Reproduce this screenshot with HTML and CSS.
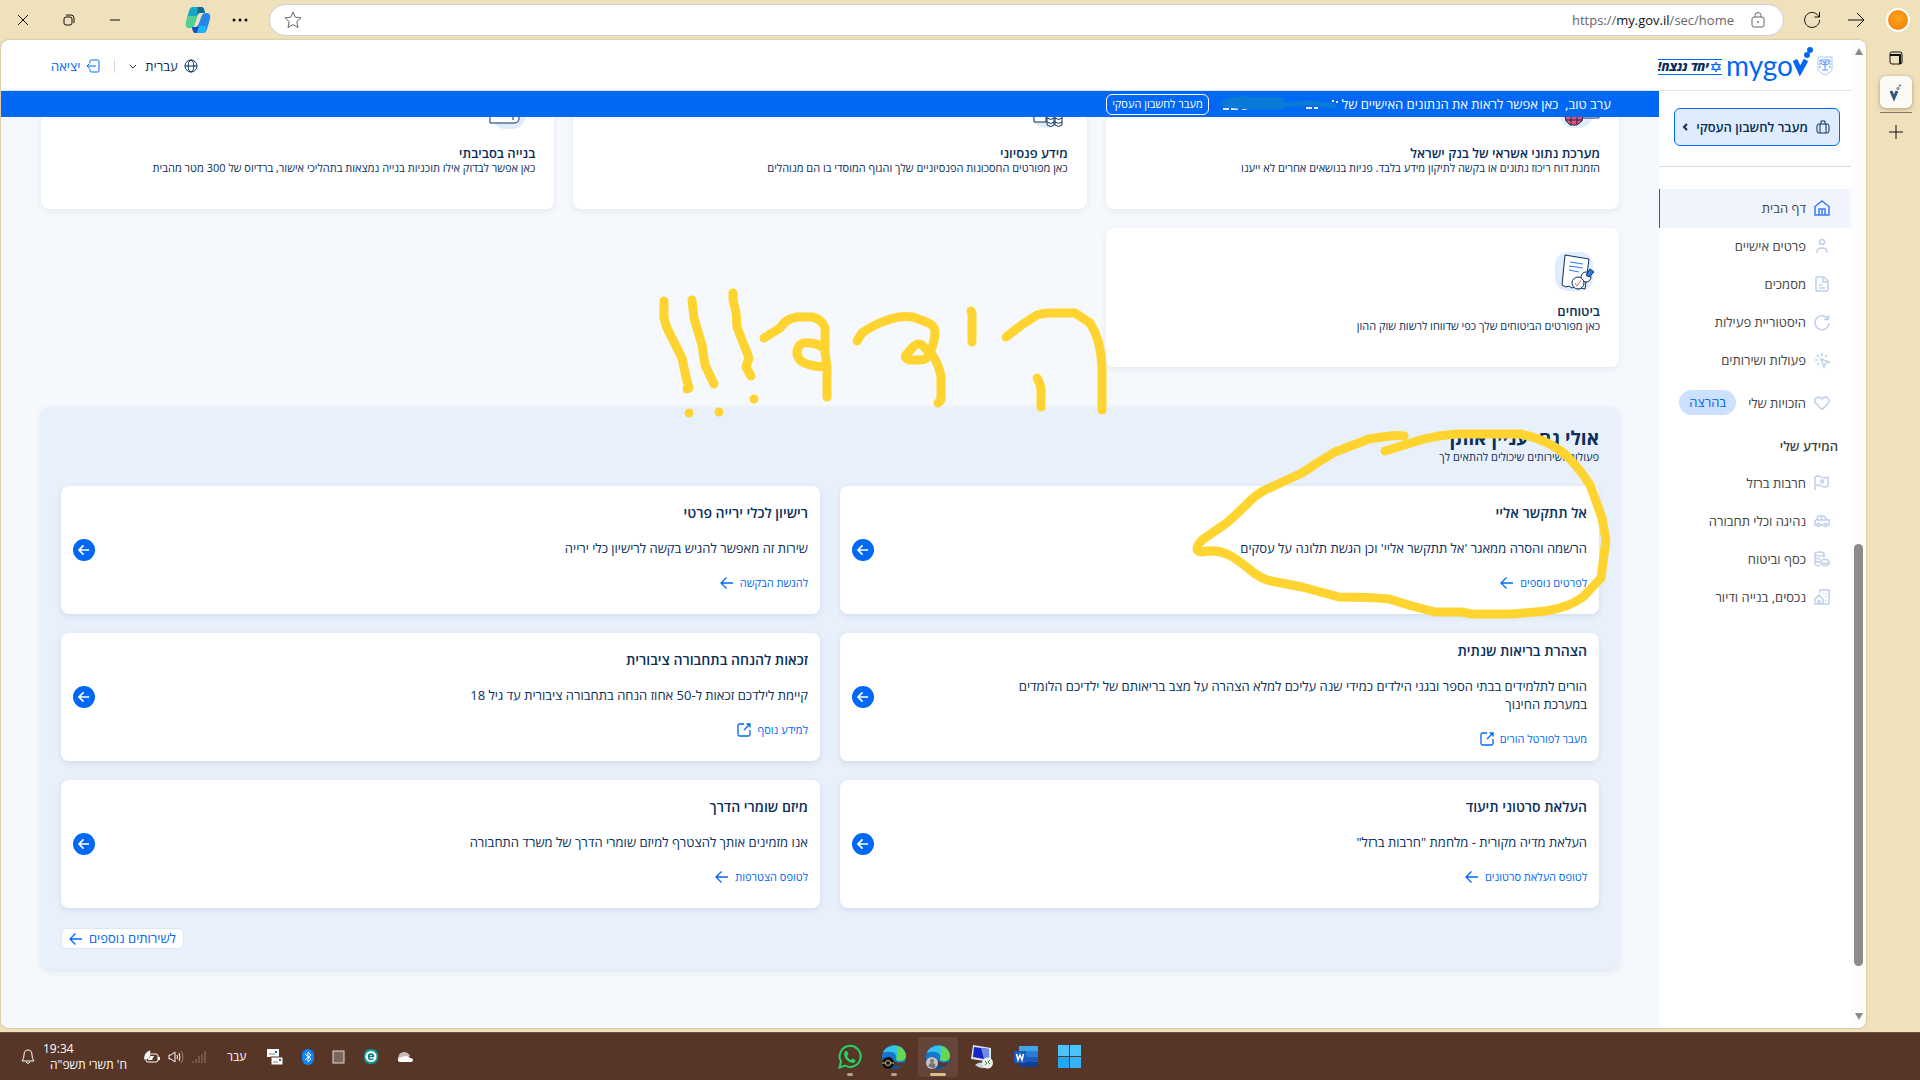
FILE: index.html
```
<!DOCTYPE html>
<html lang="he">
<head>
    <meta charset="UTF-8">
    <meta name="viewport" content="width=device-width, initial-scale=1.0">
    <title>mygov</title>
    <link rel="stylesheet" href="styles.css">
</head>
<body>
<!-- shared icons -->
<svg class="defs" aria-hidden="true">
    <symbol id="arrow" viewBox="0 0 14 14"><path d="M13 7H1M6.500 1.500L1 7l5.500 5.500"/></symbol>
    <symbol id="external" viewBox="0 0 14 14"><path d="M7 1H2.500Q1 1 1 2.500v9Q1 13 2.500 13h9q1.500 0 1.500-1.500V7M9.500 1H13v3.500M13 1L7 7"/></symbol>
    <symbol id="edge" viewBox="0 0 24 24">
        <circle cx="12" cy="12" r="12" fill="#1377d1"/>
        <path d="M1 8C4-1 20-3 23.500 8c1 5-2 8-6 8-4 0-4-2-3-3.500C15 8 8 5 1 8z" fill="#35c1e8"/>
        <path d="M15 1c6 2 9 6 9 11-1 4-5 5-8 4-2-1-2-2-1.500-3.500C16 9 15 5 15 1z" fill="#62d94e"/>
        <path d="M9 12c-2 5 2 10 9 10-6 4-14 1-15-5 0-4 3-6 6-5z" fill="#0b4f9c"/>
        <path d="M10 13c1 4 6 6 13 4-1 2-3 4-5 5-6 0-10-5-8-9z" fill="#573527"/>
    </symbol>
</svg>
<div class="window">
    <div class="topbar">
        <button class="chrome-btn" aria-label="Close"><svg width="12" height="12"><path d="M1 1l10 10M11 1L1 11"/></svg></button>
        <button class="chrome-btn" aria-label="Restore"><svg width="12" height="12"><rect x="1" y="3" width="8" height="8" rx="2"/><path d="M3 1h5q3 0 3 3v5"/></svg></button>
        <button class="chrome-btn" aria-label="Minimize"><svg width="12" height="12"><path d="M1 6h10"/></svg></button>
        <button class="chrome-btn copilot" aria-label="Copilot">
            <svg width="24" height="26" viewBox="0 0 24 26">
                <path d="M7 0h9q2 0 3 6l-5 0q-2 0-3 4l-3 9q-1 2-4 2H3q-4 0-3-6L3 4q1-4 4-4z" fill="#14a5c9"/>
                <path d="M0 15l2-6h9l-3 10q-1 2-4 2H3q-4 0-3-6z" fill="#53cf95"/>
                <path d="M17 26H9q-2 0-3-6h4q2 0 3-4l3-8q1-2 4-2h1q4 0 3 6l-3 10q-1 4-4 4z" fill="#2587ea"/>
                <path d="M17 26H9q-1 0-2-3l6-4h8l-1 3q-1 4-3 4z" fill="#17b7f2"/>
                <path d="M6 20h4q2 0 3-3l-2 9H9q-2 0-3-6z" fill="#1c4bc4"/>
                <path d="M12 0h4q2 0 3 6h-5q-2 0-3 2z" fill="#136a8c"/>
            </svg>
        </button>
        <button class="chrome-btn more" aria-label="More"><svg width="16" height="4"><circle cx="2" cy="2" r="1.500"/><circle cx="8" cy="2" r="1.500"/><circle cx="14" cy="2" r="1.500"/></svg></button>
        <div class="address">
            <svg class="gray" width="18" height="18" viewBox="0 0 18 18"><path d="M9 1l2.300 5.200 5.700.7-4.200 3.800 1.200 5.800L9 13.600 4 16.500l1.200-5.800L1 6.900l5.700-.7z"/></svg>
            <div class="url">https://<b>my.gov.il</b>/sec/home</div>
            <svg class="gray" width="14" height="16" viewBox="0 0 14 16"><rect x="1" y="5" width="12" height="10" rx="2"/><path d="M4 5V3.500a3 3 0 0 1 6 0V5"/><circle cx="7" cy="10" r=".6"/></svg>
        </div>
        <button class="chrome-btn refresh" aria-label="Refresh"><svg width="18" height="18" viewBox="0 0 18 18"><path d="M16 6a7.500 7.500 0 1 0 .6 3M16.500 1v5h-5"/></svg></button>
        <button class="chrome-btn forward" aria-label="Forward"><svg width="18" height="16" viewBox="0 0 18 16"><path d="M1 8h16M10 1l7 7-7 7"/></svg></button>
        <button class="avatar" aria-label="Profile"></button>
    </div>

    <div class="middle">
        <div class="page" dir="rtl">
            <div class="scrollbar" aria-hidden="true">
                <svg width="10" height="8"><path d="M5 0l4 7H1z"/></svg>
                <div class="track"><div class="thumb"></div></div>
                <svg width="10" height="8"><path d="M5 8l4-7H1z"/></svg>
            </div>
            <div class="site">
                <header class="header">
                    <svg width="16" height="20" viewBox="0 0 16 20" fill="none" stroke="#5b94f5"><path d="M1 1h14v12q0 3-7 6-7-3-7-6z" stroke="#a9c8fa"/><path d="M4 3v3q0 3 4 3t4-3V3M6 3v2q0 2 2 2t2-2V3M8 3v11M5 14h6"/><path d="M3 4v9M13 4v9" stroke-dasharray="2 1"/></svg>
                    <a class="logo" href="#" dir="ltr"><span>mygo</span><svg width="20" height="32" viewBox="0 0 20 32"><path d="M2 13l5 11 6-11" fill="none" stroke="#0068f5" stroke-width="5"/><circle cx="14" cy="8" r="3"/><circle cx="17" cy="3" r="3"/></svg></a>
                    <div class="slogan">
                        <svg width="12" height="12" viewBox="0 0 12 12" fill="none" stroke="#0068f5"><path d="M6 1l4.500 7.500h-9zM6 11L1.500 3.500h9z"/></svg>
                        <span>יחד ננצח!</span>
                    </div>
                    <div class="header-tools">
                        <button class="lang">
                            <svg width="14" height="14" viewBox="0 0 14 14"><circle cx="7" cy="7" r="6"/><ellipse cx="7" cy="7" rx="2.800" ry="6"/><path d="M1 7h12"/></svg>
                            <span>עברית</span>
                            <svg class="down" width="8" height="5" viewBox="0 0 8 5"><path d="M1 1l3 3 3-3"/></svg>
                        </button>
                        <a class="exit" href="#">
                            <svg width="14" height="14" viewBox="0 0 14 14"><path d="M4 4V2.500Q4 1 5.500 1h6Q13 1 13 2.500v9q0 1.500-1.500 1.500h-6Q4 13 4 11.500V10M10 7H1M3.500 4.500L1 7l2.500 2.500"/></svg>
                            <span>יציאה</span>
                        </a>
                    </div>
                </header>

                <div class="columns">
                    <nav class="sidebar">
                        <div class="switch-box">
                            <button class="switch">
                                <svg width="14" height="14" viewBox="0 0 14 14"><rect x="1" y="4" width="12" height="9" rx="2"/><path d="M4 4v9M10 4v9M5 4V1h4v3"/></svg>
                                <span>מעבר לחשבון העסקי</span>
                                <svg class="chev" width="6" height="8" viewBox="0 0 6 8"><path d="M5 1L2 4l3 3"/></svg>
                            </button>
                        </div>
                        <a class="item active" href="#"><svg viewBox="0 0 16 16"><path d="M1 6.500L8 1l7 5.500V15H1zM5 15V9h6v6M8 15v-6"/></svg>דף הבית</a>
                        <a class="item" href="#"><svg viewBox="0 0 16 16"><circle cx="8" cy="4" r="2.500"/><path d="M3 15v-1q0-4 5-4t5 4v1"/></svg>פרטים אישיים</a>
                        <a class="item" href="#"><svg viewBox="0 0 16 16"><path d="M2 2q0-1 1-1h7l4 4v9q0 1-1 1H3q-1 0-1-1zM9 1v5h5M5 9h3M5 12h6"/></svg>מסמכים</a>
                        <a class="item" href="#"><svg viewBox="0 0 16 16"><path d="M14 5a7 7 0 1 0 1 4M14.500 1v4.500H10"/></svg>היסטוריית פעילות</a>
                        <a class="item" href="#"><svg viewBox="0 0 16 16"><path d="M7 7l8 3-3.500 1.500L10 15zM8 1v3M3 3l2 2M13 3l-2 2M1 8h3M3 13l2-2"/></svg>פעולות ושירותים</a>
                        <a class="item tall" href="#"><svg viewBox="0 0 16 16"><path d="M8 14.500L2 8.500C-1.500 4 4.500-.5 8 4c3.500-4.500 9.500 0 6 4.500z"/></svg>הזכויות שלי<span class="badge">בהרצה</span></a>
                        <h2>המידע שלי</h2>
                        <a class="item" href="#"><svg viewBox="0 0 16 16"><path d="M1 15V2q3-2 6 0t7 0v9q-4 2-7 0t-6 0"/><circle cx="8" cy="6.500" r="1.500"/></svg>חרבות ברזל</a>
                        <a class="item" href="#"><svg viewBox="0 0 16 16"><path d="M3 12H1V8l2-2 1-3h6l3 4h2v5h-2M6 12h4M3 7h10M7.500 3v4"/><circle cx="4.500" cy="12" r="1.500"/><circle cx="11.500" cy="12" r="1.500"/></svg>נהיגה וכלי תחבורה</a>
                        <a class="item" href="#"><svg viewBox="0 0 16 16"><ellipse cx="5.500" cy="3" rx="4.500" ry="2"/><path d="M1 3v10q1 2 5 2M1 6q1 2 5 2M1 10q1 1 5 1M10 3v4M7 11v2q4 3 8 0v-2"/><ellipse cx="11" cy="10.500" rx="4" ry="2"/></svg>כסף וביטוח</a>
                        <a class="item" href="#"><svg viewBox="0 0 16 16"><path d="M1 10l4-4 4 4v5H1zM4 15v-3h2v3M6 4V1h9v14H9M9 4v1M12 4v1M12 7v1M12 11v1"/></svg>נכסים, בנייה ודיור</a>
                    </nav>

                    <main class="main">
                        <div class="greeting">
                            <span>ערב טוב,&nbsp; כאן אפשר לראות את הנתונים האישיים של</span>
                            <svg class="scribble" width="120" height="20" viewBox="0 0 120 20"><path d="M5 15h6M13 15h7M24 15h5M52 14h5M60 13h5M88 14h6M96 14h4M79 9h16M114 7h2M118 8h2" stroke="#e4edfd" stroke-width="2"/><path d="M5 9Q12 4 30 5L64 6V13L30 13 8 11ZM64 11L92 9 108 11 116 12" fill="#0b79d6" stroke="#0b79d6" stroke-width="5" stroke-linecap="round" stroke-linejoin="round"/></svg>
                            <button>מעבר לחשבון העסקי</button>
                        </div>
                        <div class="content">
                            <div class="tiles">
                                <a class="tile" href="#">
                                    <svg width="40" height="40" viewBox="0 0 40 40"><rect x="5" width="33" height="34" rx="14" fill="#e1ecfd"/><path d="M26 10h18v14H26" fill="#fff" stroke="#0b2f5b"/><path d="M10 22h18l-1 5-5 4h-7l-4-4z" fill="#f0506e" stroke="#0b2f5b"/><path d="M11 26h16M16 22v8M22 22v8" stroke="#0b2f5b"/></svg>
                                    <h3>מערכת נתוני אשראי של בנק ישראל</h3>
                                    <p>הזמנת דוח ריכוז נתונים או בקשה לתיקון מידע בלבד. פניות בנושאים אחרים לא ייענו</p>
                                </a>
                                <a class="tile" href="#">
                                    <svg width="40" height="40" viewBox="0 0 40 40"><rect x="8" width="31" height="34" rx="14" fill="#e1ecfd"/><path d="M11 12h12v16H11z" fill="#fff" stroke="#0b2f5b"/><path d="M24 20v11q4 3 7 0V20M32 20v11q4 3 7 0V20M24 24q4 3 7 0M24 28q4 3 7 0M32 24q4 3 7 0M32 28q4 3 7 0" fill="#fff" stroke="#0b2f5b"/></svg>
                                    <h3>מידע פנסיוני</h3>
                                    <p>כאן מפורטים החסכונות הפנסיוניים שלך והגוף המוסדי בו הם מנוהלים</p>
                                </a>
                                <a class="tile" href="#">
                                    <svg width="40" height="40" viewBox="0 0 40 40"><rect x="3" width="32" height="35" rx="12" fill="#e1ecfd"/><path d="M0 10h29v14q0 5-5 5H0zM23 23v3" fill="#fff" stroke="#0b2f5b"/></svg>
                                    <h3>בנייה בסביבתי</h3>
                                    <p>כאן אפשר לבדוק אילו תוכניות בנייה נמצאות בתהליכי אישור, ברדיוס של 300 מטר מהבית</p>
                                </a>
                                <a class="tile" href="#">
                                    <svg width="40" height="40" viewBox="0 0 40 40"><rect width="38" height="39" rx="13" fill="#e1ecfd"/><path d="M10 3l24 4-4 30-4-1-3 1-3-2-3 1-3-2-3 1-4-2z" fill="#fff" stroke="#0b2f5b"/><path d="M15 10l13 2M14 14l14 2M14 18l10 2" stroke="#2b7cf0"/><circle cx="31" cy="25" r="5" fill="#fff" stroke="#0b2f5b"/><path d="M31 23l4-6 4 3-5 5z" fill="#2b7cf0" stroke="#0b2f5b"/><circle cx="23" cy="31" r="6" fill="#fff" stroke="#0b2f5b"/><path d="M20 31l2 3 4-6" fill="none" stroke="#f0708a"/></svg>
                                    <h3>ביטוחים</h3>
                                    <p>כאן מפורטים הביטוחים שלך כפי שדווחו לרשות שוק ההון</p>
                                </a>
                            </div>

                            <section class="offers">
                                <h1>אולי גם יעניין אותך</h1>
                                <p class="sub">פעולות ושירותים שיכולים להתאים לך</p>
                                <div class="offer-grid">
                                    <article class="offer">
                                        <div>
                                            <h3>אל תתקשר אליי</h3>
                                            <p>הרשמה והסרה ממאגר 'אל תתקשר אליי' וכן הגשת תלונה על עסקים</p>
                                            <a href="#">לפרטים נוספים <svg><use href="#arrow"/></svg></a>
                                        </div>
                                        <button aria-label="אל תתקשר אליי"><svg><use href="#arrow"/></svg></button>
                                    </article>
                                    <article class="offer">
                                        <div>
                                            <h3>רישיון לכלי ירייה פרטי</h3>
                                            <p>שירות זה מאפשר להגיש בקשה לרישיון כלי ירייה</p>
                                            <a href="#">להגשת הבקשה <svg><use href="#arrow"/></svg></a>
                                        </div>
                                        <button aria-label="רישיון לכלי ירייה פרטי"><svg><use href="#arrow"/></svg></button>
                                    </article>
                                    <article class="offer">
                                        <div>
                                            <h3>הצהרת בריאות שנתית</h3>
                                            <p>הורים לתלמידים בבתי הספר ובגני הילדים כמידי שנה עליכם למלא הצהרה על מצב בריאותם של ילדיכם הלומדים במערכת החינוך</p>
                                            <a href="#">מעבר לפורטל הורים <svg><use href="#external"/></svg></a>
                                        </div>
                                        <button aria-label="הצהרת בריאות שנתית"><svg><use href="#arrow"/></svg></button>
                                    </article>
                                    <article class="offer">
                                        <div>
                                            <h3>זכאות להנחה בתחבורה ציבורית</h3>
                                            <p>קיימת לילדכם זכאות ל-50 אחוז הנחה בתחבורה ציבורית עד גיל 18</p>
                                            <a href="#">למידע נוסף <svg><use href="#external"/></svg></a>
                                        </div>
                                        <button aria-label="זכאות להנחה בתחבורה ציבורית"><svg><use href="#arrow"/></svg></button>
                                    </article>
                                    <article class="offer">
                                        <div>
                                            <h3>העלאת סרטוני תיעוד</h3>
                                            <p>העלאת מדיה מקורית - מלחמת "חרבות ברזל"</p>
                                            <a href="#">לטופס העלאת סרטונים <svg><use href="#arrow"/></svg></a>
                                        </div>
                                        <button aria-label="העלאת סרטוני תיעוד"><svg><use href="#arrow"/></svg></button>
                                    </article>
                                    <article class="offer">
                                        <div>
                                            <h3>מיזם שומרי הדרך</h3>
                                            <p>אנו מזמינים אותך להצטרף למיזם שומרי הדרך של משרד התחבורה</p>
                                            <a href="#">לטופס הצטרפות <svg><use href="#arrow"/></svg></a>
                                        </div>
                                        <button aria-label="מיזם שומרי הדרך"><svg><use href="#arrow"/></svg></button>
                                    </article>
                                </div>
                                <a class="all" href="#">לשירותים נוספים <svg><use href="#arrow"/></svg></a>
                            </section>
                        </div>
                    </main>
                </div>
            </div>
        </div>
        <div class="tabs">
            <button aria-label="Tab actions"><svg width="14" height="14"><rect x="1" y="1" width="12" height="12" rx="2"/><path d="M1 4h10M11 3v10" stroke-width="2"/></svg></button>
            <button class="tab" aria-label="mygov"><svg width="14" height="16" viewBox="0 0 14 16"><path d="M2 7l3 7 3-7" stroke="#35597c" stroke-width="3"/><circle cx="9" cy="4.500" r="1" stroke="#35597c"/><circle cx="11" cy="1.500" r=".7" stroke="#35597c"/></svg></button>
            <button class="plus" aria-label="New tab"><svg width="14" height="14"><path d="M7 0v14M0 7h14"/></svg></button>
        </div>
    </div>

    <footer class="taskbar">
        <div class="tray">
            <svg class="line" width="14" height="16" viewBox="0 0 14 16"><path d="M1 12q2-2 2-6 0-5 4-5t4 5q0 4 2 6zM5 13q2 3 4 0"/></svg>
            <div class="clock"><div>19:34</div><div dir="rtl">ח' תשרי תשפ"ה</div></div>
            <svg width="16" height="14" viewBox="0 0 16 14"><rect x="2" y="4" width="12" height="8" rx="2" fill="none" stroke="#fff"/><path d="M4 6h6l-2 4H4z" fill="#fff"/><path d="M15 7v3" stroke="#fff" stroke-width="2"/><path d="M0 10Q-1 3 6 0q2 6-2 9-2 1-4 1z" fill="#fff" stroke="#573527" stroke-width=".5"/></svg>
            <svg class="line" width="16" height="14" viewBox="0 0 16 14"><path d="M1 5h2l4-3v10L3 9H1zM9 5q1 2 0 4M11 3q2 4 0 8"/><path d="M13 1q4 6 0 12" opacity=".4"/></svg>
            <svg class="line" width="14" height="14" viewBox="0 0 14 14"><path d="M1 11v2M4 9v4M7 6v7M10 4v9M13 1v12" opacity=".35"/></svg>
            <div class="keyboard">עבר</div>
            <div class="tray-icons">
                <svg width="16" height="16" viewBox="0 0 16 16"><rect width="12" height="8" fill="#fff"/><rect x="4" y="8" width="12" height="8" fill="#fff" stroke="#573527"/><path d="M2 5h6M6 13h5" stroke="#888"/><path d="M8 2h2v2H8zM12 10h2v2h-2z" fill="#2567b5"/></svg>
                <svg width="12" height="16" viewBox="0 0 12 16"><rect width="12" height="16" rx="6" fill="#0a84ff"/><path d="M3 5l6 5-3 3V3l3 3-6 5" fill="none" stroke="#fff"/></svg>
                <svg width="12" height="14"><rect x="0" y="1" width="11" height="12" fill="#7d665c" stroke="#ddd"/></svg>
                <svg width="14" height="16" viewBox="0 0 14 16"><rect width="14" height="15" rx="6" fill="#0b9a9d"/><circle cx="7" cy="7.500" r="5.500" fill="#fff"/><path d="M4.500 7.500h5q0-2.500-2.500-2.500t-2.500 2.500q0 3 2.500 3 2 0 2.500-1" fill="none" stroke="#0b7a7d" stroke-width="1.500"/></svg>
                <svg width="16" height="12" viewBox="0 0 16 12"><path d="M1 7q1-6 6-6 4 0 6 4l-9 5z" fill="#c9bdb7"/><path d="M2 11q-3-3 1-4.500l5-1.500q4 0 5 2 3 0 3 2t-2 2z" fill="#fff"/></svg>
            </div>
        </div>
        <div class="apps">
            <button class="running" aria-label="WhatsApp"><svg width="24" height="24" viewBox="0 0 24 24"><path d="M1.500 22.500l1.500-6a10.500 10.500 0 1 1 4 4z" fill="none" stroke="#25d366" stroke-width="2"/><path d="M7 6h2l1.500 3-1.500 2q1.500 3 4 4l1.500-1.500 3 1.500q0 3-3 3-7-1-8.500-9z" fill="#25d366"/></svg></button>
            <button class="running" aria-label="Edge"><svg width="24" height="24" viewBox="0 0 24 24"><use href="#edge"/><circle cx="6" cy="18" r="6" fill="#111"/><circle cx="6" cy="18" r="2.500" fill="none" stroke="#d8c08a"/><path d="M0 18h3M9 18h3" stroke="#d8c08a"/></svg></button>
            <button class="current" aria-label="Edge"><svg width="24" height="24" viewBox="0 0 24 24"><use href="#edge"/><circle cx="6" cy="18" r="6" fill="#c4c4c4"/><circle cx="6" cy="16" r="2" fill="#777"/><path d="M2.500 21q0-3 3.500-3t3.500 3-3.500 2-3.500-2z" fill="#777"/></svg></button>
            <button aria-label="Remote Desktop"><svg width="24" height="24" viewBox="0 0 24 24"><path d="M5 20q6-6 12 2-6 3-12-2z" fill="#ccd3da"/><path d="M3 0l18 3v14L1 14z" fill="#dde2ea"/><path d="M4 2l15 2v11L3 12z" fill="#1627c4"/><path d="M11 3l8 1v11l-5-1z" fill="#6d8ee6"/><circle cx="17.500" cy="18" r="5.500" fill="#eee"/><path d="M15 16l2 2-2 2M20 15l-2 2 2 2" stroke="#2c9340" fill="none"/></svg></button>
            <button aria-label="Word"><svg width="24" height="22" viewBox="0 0 24 22"><rect x="5" width="19" height="6" fill="#41a5ee"/><rect x="5" y="5" width="19" height="6" fill="#2b7cd3"/><rect x="5" y="11" width="19" height="6" fill="#185abd"/><rect x="5" y="16" width="19" height="5" fill="#103f91"/><rect y="5" width="12" height="12" fill="#1b5bbd"/><path d="M2.500 8l1.500 6 2-5 2 5 1.500-6" fill="none" stroke="#fff" stroke-width="1.500"/></svg></button>
            <button aria-label="Start"><svg width="24" height="24" fill="#4cc2ff"><rect width="11" height="11"/><rect x="12" width="11" height="11"/><rect y="12" width="11" height="11" fill="#22a7f5"/><rect x="12" y="12" width="11" height="11" fill="#35b2f8"/></svg></button>
        </div>
    </footer>

    <!-- marker pen drawing over the page -->
    <svg class="marker" viewBox="0 0 1920 1080" aria-hidden="true">
        <path d="M664 301V318L667 328 682 358 686 377 689 388 687 389"/>
        <path d="M692 300L694 318 702 345 705 365 714 384"/>
        <path d="M733 293V300L736 312 737 327 749 358 746 367 751 376"/>
        <path d="M754 399h0M719 412h0M689 413h0"/>
        <path d="M764 338L780 328 785 322Q791 318 797 317H812Q822 319 825 328V352L827 367V397M822 347Q816 343 810 343 802 342 799 346 794 354 801 361 808 366 824 367"/>
        <path d="M857 341L862 333Q873 325 885 321 900 315 913 317L926 322Q935 325 935 332 935 341 930 353 927 360 920 360H909Q904 358 906 355L913 347Q919 341 924 347L933 356 Q938 363 941 376V400L938 403"/>
        <path d="M971 311L972 313V342"/>
        <path d="M1006 337L1023 324 1037 315Q1043 313 1050 313H1075L1090 323Q1101 340 1102 367V410"/>
        <path d="M1037 378Q1041 384 1041 391V407"/>
        <path d="M1404 436Q1396 434 1369 439L1335 452 1317 463 1302 473 1265 490Q1254 496 1246 505L1228 522 1202 540Q1192 551 1202 552 1215 549 1227 554 1236 558 1254 573 1264 580 1271 581L1302 587 1339 597Q1370 597 1389 599L1412 606 1435 612H1461L1472 614H1513L1546 611Q1570 607 1583 597L1601 578 1606 540 1602 518 1593 493 1590 485Q1582 472 1568 457 1550 440 1520 434H1457Q1440 435 1424 439L1385 451"/>
    </svg>
</div>
</body>
</html>
```
FILE: styles.css
```
* {
    box-sizing: border-box;
}
body {
    margin: 0;
    font-family: "Open Sans", "Liberation Sans", sans-serif;
    color: #0b2f5b;
}
h1, h2, h3, p {
    margin: 0;
}
a {
    color: #0068f5;
    text-decoration: none;
}
button {
    font: inherit;
    color: inherit;
    background: none;
    border: none;
    padding: 0;
    white-space: nowrap;
}
svg {
    flex-shrink: 0;
    overflow: visible;
}
.defs {
    display: none;
}
.window {
    position: relative;
    height: 100vh;
    display: flex;
    flex-direction: column;
    background: #efe1bc;
    overflow: hidden;
}

/* browser bar */
.topbar {
    height: 40px;
    display: flex;
    align-items: center;
    padding-right: 10px;
}
.chrome-btn {
    width: 46px;
    height: 40px;
    display: flex;
    align-items: center;
    justify-content: center;
}
.chrome-btn svg, .tabs svg {
    fill: none;
    stroke: #111;
}
.chrome-btn.copilot {
    margin-left: 37px;
}
.chrome-btn.copilot svg {
    stroke: none;
}
.chrome-btn.more {
    width: 38px;
}
.chrome-btn.more svg {
    fill: #111;
    stroke: none;
}
.address {
    flex: 1;
    height: 32px;
    margin: 0 5px 0 10px;
    padding: 0 18px 0 14px;
    display: flex;
    align-items: center;
    background: #fff;
    border: 1px solid #cfcfcf;
    border-radius: 16px;
}
.gray {
    fill: none;
    stroke: #666;
}
.url {
    flex: 1;
    margin-right: 17px;
    text-align: right;
    font-size: 13px;
    color: #666;
}
.url b {
    font-weight: 400;
    color: #111;
}
.chrome-btn.forward {
    width: 42px;
}
.avatar {
    width: 24px;
    height: 24px;
    margin-left: 9px;
    border: 2px solid #fff;
    border-radius: 50%;
    background: radial-gradient(circle at 50% 40%, #ffa51f, #f07a06);
}

/* page frame */
.middle {
    flex: 1;
    min-height: 0;
    display: flex;
    padding: 0 0 4px 1px;
}
.page {
    flex: 1;
    display: flex;
    background: #fff;
    border-radius: 8px;
    overflow: hidden;
    box-shadow: 0 0 2px #a89c78;
}
.scrollbar {
    width: 15px;
    padding: 8px 3px;
    display: flex;
    flex-direction: column;
    align-items: center;
    background: #fcfcfc;
    fill: #8b8b8b;
}
.track {
    flex: 1;
    width: 9px;
    padding: 488px 0 46px;
    display: flex;
}
.thumb {
    flex: 1;
    background: #8b8b8b;
    border-radius: 5px;
}
.site {
    flex: 1;
    display: flex;
    flex-direction: column;
}
.header {
    height: 51px;
    display: flex;
    align-items: center;
    padding: 2px 18px 0 50px;
    border-bottom: 1px solid #dfe2e6;
}
.logo {
    display: flex;
    align-items: center;
    margin-right: 4px;
    font-family: Lato, sans-serif;
    font-size: 28px;
    line-height: 30px;
}
.logo span {
    margin-bottom: 2px;
}
.logo svg {
    fill: #0068f5;
    margin-bottom: 6px;
}
.slogan {
    display: flex;
    align-items: center;
    gap: 1px;
    margin: 2px 4px 0 0;
    border-top: 1px solid #0068f5;
    border-bottom: 1px solid #0068f5;
    font-size: 12px;
    font-weight: 800;
    font-style: italic;
    line-height: 14px;
}
.header-tools {
    margin-right: auto;
    display: flex;
    align-items: center;
    font-size: 13px;
}
.header-tools svg {
    fill: none;
    stroke: currentColor;
}
.lang, .exit {
    display: flex;
    align-items: center;
    gap: 6px;
}
.lang {
    padding-left: 12px;
    border-left: 1px solid #d4d9e2;
    line-height: 12px;
}
.lang .down {
    margin: 0 2px;
}
.exit {
    margin-right: 14px;
}
.columns {
    flex: 1;
    min-height: 0;
    display: flex;
}

/* side menu */
.sidebar {
    width: 192px;
    background: #fff;
    color: #444;
}
.switch-box {
    padding: 17px 11px 20px 15px;
    margin-bottom: 22px;
    border-bottom: 1px solid #d5dae0;
}
.switch {
    width: 100%;
    height: 38px;
    display: flex;
    align-items: center;
    gap: 8px;
    padding: 0 9px;
    background: #deecfe;
    border: 1px solid #0068f5;
    border-radius: 6px;
    color: #0b2f5b;
    font-size: 13px;
    font-weight: 600;
}
.switch svg {
    fill: none;
    stroke: #0b2f5b;
}
.switch .chev {
    stroke-width: 2;
}
.item {
    height: 38px;
    display: flex;
    align-items: center;
    gap: 8px;
    padding: 0 21px 2px 0;
    color: #444;
    font-size: 13px;
}
.item svg {
    width: 16px;
    height: 16px;
    fill: none;
    stroke: #c0cfea;
    stroke-width: 1.5;
}
.item.active {
    height: 39px;
    background: #f0f4fd;
    border-left: 1px solid #0068f5;
}
.item.active svg {
    stroke: #3c7df5;
}
.item.tall {
    height: 47px;
}
.badge {
    margin-right: 4px;
    padding: 0 10px;
    background: #cce1ff;
    color: #0068f5;
    border-radius: 13px;
    line-height: 25px;
}
.sidebar h2 {
    padding-right: 13px;
    font-size: 13px;
    font-weight: 600;
    line-height: 38px;
}

/* content */
.main {
    flex: 1;
    min-width: 0;
    display: flex;
    flex-direction: column;
    background: #f5f9fd;
}
.greeting {
    height: 26px;
    flex-shrink: 0;
    display: flex;
    align-items: center;
    padding-right: 48px;
    background: #0068f5;
    color: #fff;
    font-size: 13px;
}
.scribble {
    margin: 0 4px 0 9px;
}
.greeting button {
    height: 21px;
    padding: 0 5px;
    border: 1px solid #fff;
    border-radius: 6px;
    font-size: 11px;
    line-height: 16px;
}
.content {
    flex: 1;
    min-height: 0;
    padding: 0 40px;
    overflow: hidden;
}
.tiles {
    display: grid;
    grid-template-columns: repeat(3, 1fr);
    gap: 19px;
    margin-top: -47px; /* scrolled under the blue bar */
    margin-bottom: 40px;
}
.tile {
    height: 139px;
    padding: 24px 19px;
    background: #fff;
    border-radius: 8px;
    box-shadow: 0 2px 6px rgba(11, 47, 91, 0.08);
    color: #0b2f5b;
}
.tile svg {
    display: block;
    margin: 0 5px 11px;
}
.tile h3 {
    font-size: 13px;
    font-weight: 600;
    line-height: 16px;
}
.tile p {
    font-size: 11px;
    line-height: 14px;
    white-space: nowrap;
}
.offers {
    padding: 20px;
    background: #e8f0fc;
    border-radius: 8px;
    box-shadow: 0 2px 6px rgba(11, 47, 91, 0.1);
}
.offers h1 {
    font-size: 19px;
    font-weight: 700;
    line-height: 22px;
}
.offers .sub {
    font-size: 11px;
    line-height: 16px;
    margin-bottom: 21px;
}
.offer-grid {
    display: grid;
    grid-template-columns: 1fr 1fr;
    gap: 19px 20px;
}
.offer {
    height: 128px;
    display: flex;
    align-items: center;
    justify-content: space-between;
    gap: 20px;
    padding: 0 12px;
    background: #fff;
    border-radius: 8px;
    box-shadow: 0 2px 6px rgba(11, 47, 91, 0.1);
}
.offer > div {
    max-width: 590px;
    padding-bottom: 4px;
}
.offer h3 {
    font-size: 14px;
    font-weight: 600;
    line-height: 18px;
}
.offer p {
    margin: 17px 0;
    font-size: 13px;
    line-height: 18px;
}
.offer a {
    display: flex;
    align-items: center;
    gap: 6px;
    font-size: 11px;
    line-height: 18px;
}
.offer a svg, .all svg {
    width: 14px;
    height: 14px;
    fill: none;
    stroke: #0068f5;
    stroke-width: 1.3;
}
.offer button {
    width: 22px;
    height: 22px;
    flex-shrink: 0;
    display: flex;
    align-items: center;
    justify-content: center;
    background: #0068f5;
    border-radius: 50%;
}
.offer button svg {
    width: 12px;
    height: 12px;
    fill: none;
    stroke: #fff;
    stroke-width: 2;
}
.all {
    width: fit-content;
    display: flex;
    align-items: center;
    gap: 6px;
    margin: 20px auto 0 0;
    padding: 0 7px;
    background: #fff;
    border: 1px solid #dbe6f7;
    border-radius: 6px;
    font-size: 13px;
    line-height: 19px;
}

/* vertical tab strip */
.tabs {
    width: 54px;
    padding: 11px 8px 0 14px;
    display: flex;
    flex-direction: column;
    align-items: center;
}
.tabs button {
    width: 32px;
    display: flex;
    align-items: center;
    justify-content: center;
}
.tabs .tab {
    height: 32px;
    margin: 11px 0 4px;
    background: #fcfaf4;
    border-radius: 6px;
    box-shadow: 0 1px 4px rgba(80, 60, 20, 0.4);
}
.tabs .plus {
    padding-top: 12px;
    border-top: 1px solid #85786a;
}

/* taskbar */
.taskbar {
    height: 48px;
    display: grid;
    grid-template-columns: 1fr auto 1fr;
    align-items: center;
    background: #573527;
    border-top: 1px solid #6b4c3d;
    color: #fff;
    font-size: 12px;
}
.tray, .tray-icons, .apps {
    display: flex;
    align-items: center;
}
.tray {
    padding-left: 21px;
    gap: 8px;
}
.line {
    fill: none;
    stroke: #fff;
}
.clock {
    width: 84px;
    margin-right: 9px;
    line-height: 16px;
    white-space: nowrap;
}
.keyboard {
    margin: 0 13px;
}
.tray-icons {
    gap: 19px;
}
.apps {
    gap: 4px;
}
.apps button {
    width: 40px;
    height: 40px;
    display: flex;
    flex-direction: column;
    align-items: center;
    justify-content: center;
    border-radius: 4px;
}
.apps .running, .apps .current {
    padding-top: 7px;
    gap: 4px;
}
.apps .running::after, .apps .current::after {
    content: "";
    width: 6px;
    height: 3px;
    border-radius: 2px;
    background: #b5a49c;
}
.apps .current {
    background: #65453a;
}
.apps .current::after {
    width: 16px;
    background: #d8c08a;
}

.marker {
    position: absolute;
    top: 0;
    left: 0;
    width: 100%;
    height: 100%;
    pointer-events: none;
    fill: none;
    stroke: #ffd430;
    stroke-width: 9;
    stroke-linecap: round;
    stroke-linejoin: round;
}
```
